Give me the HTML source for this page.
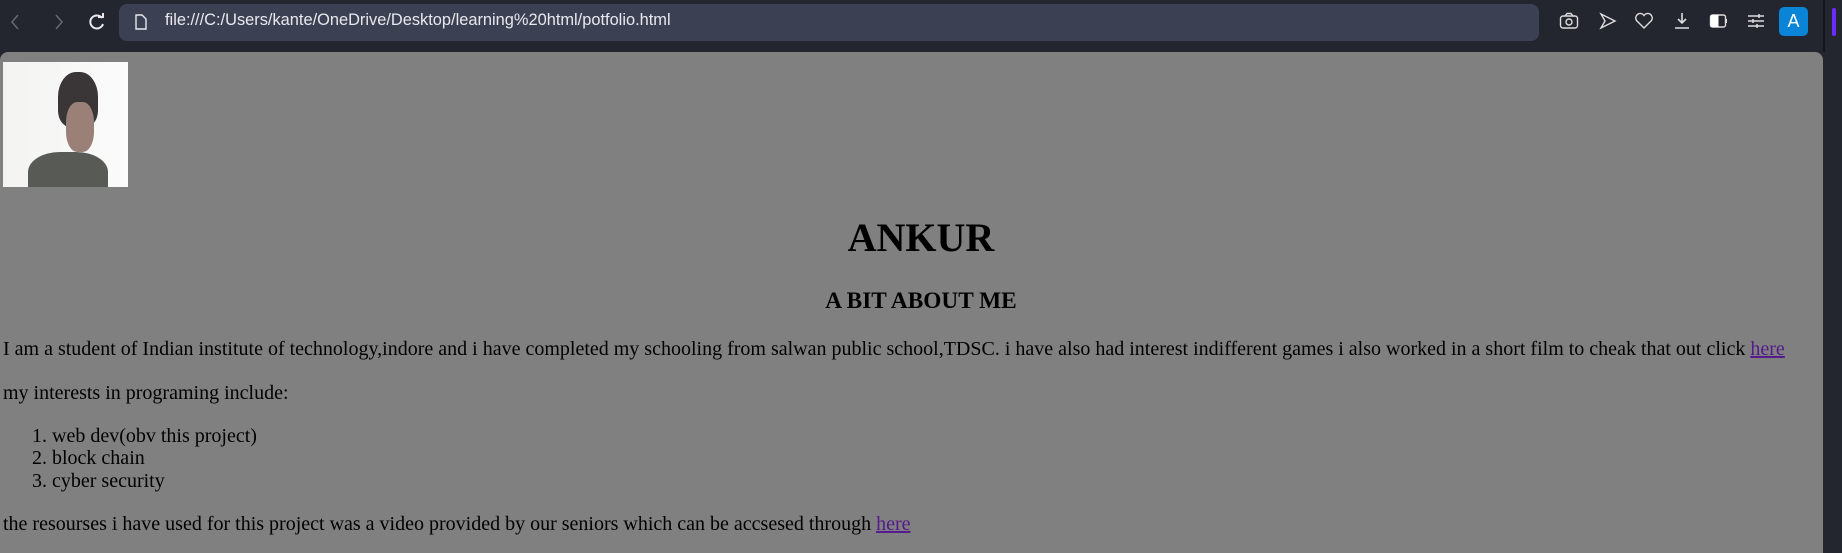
<!DOCTYPE html>
<html><head><meta charset="utf-8"><style>
body{margin:0;width:1842px;height:553px;overflow:hidden;background:#23252f;position:relative;font-family:"Liberation Serif",serif;}
.bar{position:absolute;left:119px;top:4px;width:1420px;height:37px;background:#3c4053;border-radius:8px;}
.url{position:absolute;left:165px;top:11px;color:#e8e8ee;font:16.4px "Liberation Sans",sans-serif;}
.page{position:absolute;left:0;top:52px;width:1823px;height:501px;background:#808080;border-radius:8px 8px 0 0;}
.t{position:absolute;white-space:nowrap;color:#000;line-height:1;}
a{color:#551a8b;}
.ic{position:absolute;top:12px;}
</style></head><body>
<svg class="ic" style="left:8px" width="14" height="20" viewBox="0 0 14 20"><path d="M10 3 L4 10 L10 17" stroke="#666a75" stroke-width="1.5" fill="none"/></svg>
<svg class="ic" style="left:52px" width="14" height="20" viewBox="0 0 14 20"><path d="M4 3 L10 10 L4 17" stroke="#666a75" stroke-width="1.5" fill="none"/></svg>
<svg class="ic" style="left:87px" width="20" height="20" viewBox="0 0 20 20"><path d="M15 6 A6.5 6.5 0 1 0 16 12" stroke="#e8e8ee" stroke-width="2" fill="none"/><path d="M11 5 L16 5 L16 1" stroke="#e8e8ee" stroke-width="2" fill="none"/></svg>
<div class="bar"></div>
<svg class="ic" style="left:134px;top:13px" width="14" height="18" viewBox="0 0 14 18"><path d="M2 2 H8 L12 6 V16 H2 Z" stroke="#e8e8ee" stroke-width="1.4" fill="none"/></svg>
<div class="url">file:///C:/Users/kante/OneDrive/Desktop/learning%20html/potfolio.html</div>
<svg class="ic" style="left:1559px" width="20" height="18" viewBox="0 0 20 18"><rect x="1.5" y="4" width="17" height="12" rx="2.5" stroke="#ddd" stroke-width="1.4" fill="none"/><circle cx="10" cy="10" r="3" stroke="#ddd" stroke-width="1.4" fill="none"/><path d="M6 4 L8 1.5 H12 L14 4" stroke="#ddd" stroke-width="1.4" fill="none"/></svg>
<svg class="ic" style="left:1599px" width="18" height="18" viewBox="0 0 18 18"><path d="M2 2 L16 9 L2 16 L6 9 Z" stroke="#ddd" stroke-width="1.4" fill="none"/></svg>
<svg class="ic" style="left:1634px" width="20" height="18" viewBox="0 0 20 18"><path d="M10 16 L2.5 8.5 A4.3 4.3 0 0 1 10 3.5 A4.3 4.3 0 0 1 17.5 8.5 Z" stroke="#ddd" stroke-width="1.4" fill="none"/></svg>
<svg class="ic" style="left:1673px" width="18" height="18" viewBox="0 0 18 18"><path d="M9 1 V11 M5 7 L9 11 L13 7 M2 16 H16" stroke="#ddd" stroke-width="1.6" fill="none"/></svg>
<svg class="ic" style="left:1709px" width="20" height="18" viewBox="0 0 20 18"><rect x="1.5" y="3" width="15" height="12" rx="2" stroke="#ddd" stroke-width="1.4" fill="none"/><rect x="1.5" y="3" width="8" height="12" fill="#fff"/><path d="M17 7 V11" stroke="#ddd" stroke-width="2"/></svg>
<svg class="ic" style="left:1747px" width="18" height="18" viewBox="0 0 18 18"><path d="M1 4 H17 M1 9 H17 M1 14 H17 M12 2 V6 M6 7 V11 M10 12 V16" stroke="#ddd" stroke-width="1.5" fill="none"/></svg>
<div style="position:absolute;left:1779px;top:7px;width:29px;height:29px;background:#0a84d6;border-radius:5px;color:#fff;font:18px 'Liberation Sans',sans-serif;text-align:center;line-height:29px">A</div>
<div style="position:absolute;left:1823px;top:0;width:2px;height:52px;background:#15161c"></div>
<div style="position:absolute;left:1832px;top:8px;width:4px;height:28px;background:#6b2cff;border-radius:2px"></div>
<div class="page"></div>
<div style="position:absolute;left:3px;top:62px;width:125px;height:125px;background:linear-gradient(90deg,#f3f3f2,#fbfbfb);overflow:hidden">
<div style="position:absolute;left:55px;top:10px;width:40px;height:55px;background:#3a3638;border-radius:45% 45% 30% 30%"></div>
<div style="position:absolute;left:63px;top:40px;width:28px;height:50px;background:#9a8076;border-radius:40%"></div>
<div style="position:absolute;left:25px;top:90px;width:80px;height:50px;background:#575a55;border-radius:40% 40% 0 0"></div>
</div>
<div class="t" style="left:0;width:1842px;text-align:center;top:218px;font-size:40px;font-weight:bold">ANKUR</div>
<div class="t" style="left:0;width:1842px;text-align:center;top:290px;font-size:23.3px;font-weight:bold">A BIT ABOUT ME</div>
<div class="t" style="left:3px;top:339px;font-size:20px">I am a student of Indian institute of technology,indore and i have completed my schooling from salwan public school,TDSC. i have also had interest indifferent games i also worked in a short film to cheak that out click <a href="#">here</a></div>
<div class="t" style="left:3px;top:383px;font-size:20px">my interests in programing include:</div>
<div class="t" style="left:32px;top:426px;font-size:20px">1. web dev(obv this project)</div>
<div class="t" style="left:32px;top:448px;font-size:20px">2. block chain</div>
<div class="t" style="left:32px;top:471px;font-size:20px">3. cyber security</div>
<div class="t" style="left:3px;top:514px;font-size:20px">the resourses i have used for this project was a video provided by our seniors which can be accsesed through <a href="#">here</a></div>
</body></html>
